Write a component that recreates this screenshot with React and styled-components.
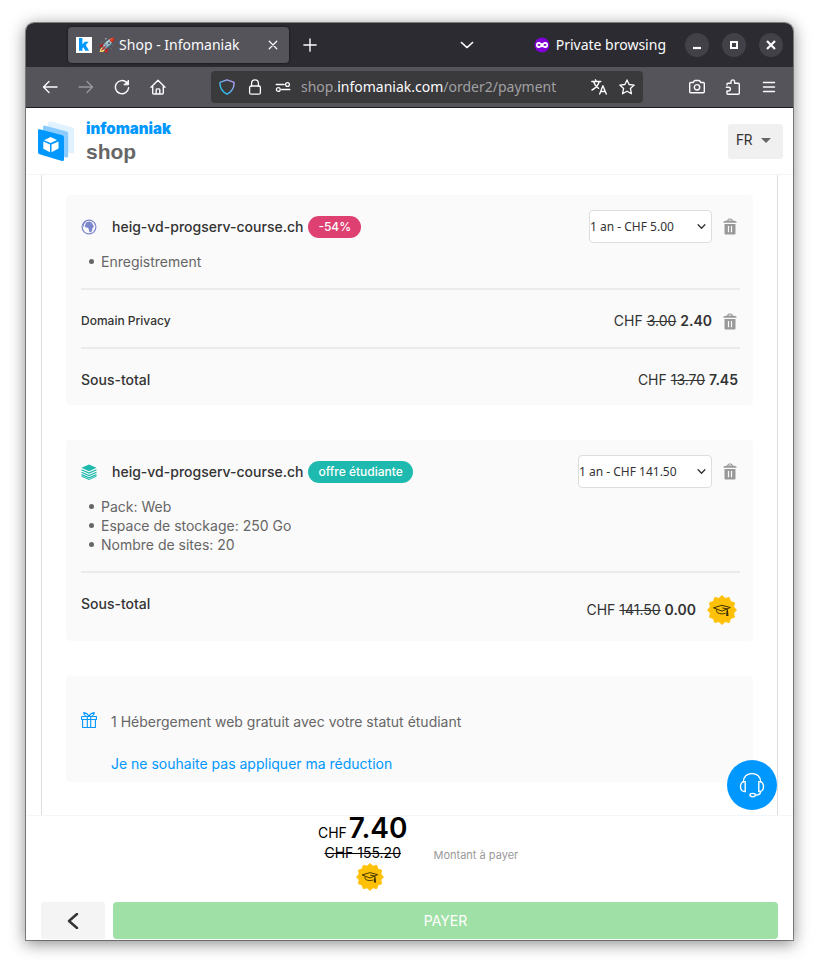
import React from "react";
import styled, { createGlobalStyle } from "styled-components";

const sans = `Inter, "Liberation Sans", sans-serif`;
const chromeFont = `"Noto Sans", "Noto Color Emoji", sans-serif`;
const blue = "#0098ff";

const GlobalStyle = createGlobalStyle`
  * { box-sizing: border-box; }
  body { margin: 0; background: #fff; font-family: ${sans}; font-size: 14px; color: #333; }
  button, select, input { font: inherit; color: inherit; margin: 0; }
  button { border: 0; padding: 0; background: none; cursor: pointer; }
  svg { display: block; flex: none; }
`;

const Desktop = styled.div`
  display: flex;
  min-height: 100vh;
  padding: 23px 26px 29px;
  overflow: hidden;
`;
const Window = styled.div`
  flex: 1;
  min-width: 0;
  display: flex;
  flex-direction: column;
  background: #fff;
  border-radius: 8px 8px 0 0;
  box-shadow: 0 0 0 1px rgba(0, 0, 0, 0.4), 0 3px 16px 1px rgba(0, 0, 0, 0.45);
`;

/* Browser chrome */
const TabBar = styled.div`
  display: flex;
  align-items: center;
  height: 44px;
  padding: 0 10px 0 42px;
  background: #2c2b31;
  border-radius: 8px 8px 0 0;
  color: #fbfbfe;
  font: 14px/20px ${chromeFont};
`;
const Tab = styled.div`
  display: flex;
  align-items: center;
  width: 221px;
  height: 36px;
  padding: 0 8px;
  background: #55545a;
  border-radius: 4px;
  box-shadow: 0 0 3px rgba(0, 0, 0, 0.6);
`;
const TabTitle = styled.span`
  flex: 1;
  margin-left: 6px;
  white-space: nowrap;
`;
const TabButton = styled.button`
  display: grid;
  place-items: center;
  width: ${(p) => p.$size || 16}px;
  height: ${(p) => p.$size || 16}px;
`;
const NewTab = styled(TabButton)`
  margin-left: 9px;
`;
const PrivateGroup = styled.div`
  display: flex;
  align-items: center;
  gap: 6px;
  margin: 0 19px 0 59px;
  white-space: nowrap;
`;
const Spacer = styled.div`
  flex: 1;
`;
const WindowButtons = styled.div`
  display: flex;
  gap: 13px;
`;
const WindowButton = styled.button`
  display: grid;
  place-items: center;
  width: 24px;
  height: 24px;
  border-radius: 50%;
  background: #424147;
`;
const Toolbar = styled.div`
  display: flex;
  align-items: center;
  height: 41px;
  padding: 0 6px;
  background: #55545a;
  border-bottom: 1px solid #1c1b22;
  color: #fbfbfe;
`;
const ToolButton = styled.button`
  display: grid;
  place-items: center;
  width: 36px;
  height: 32px;
  opacity: ${(p) => (p.disabled ? 0.4 : 1)};
`;
const AddressBar = styled.div`
  flex: 1;
  min-width: 0;
  display: flex;
  align-items: center;
  gap: 12px;
  height: 32px;
  margin: 0 36px 0 35px;
  padding: 0 8px;
  background: #3a393b;
  border-radius: 4px;
`;
const Address = styled.div`
  flex: 1;
  margin-left: -2px;
  overflow: hidden;
  white-space: nowrap;
  color: #a0a0a3;
  font: 14px/20px ${chromeFont};
`;
const Host = styled.span`
  color: #fbfbfe;
`;

/* Shop page */
const Header = styled.header`
  display: flex;
  align-items: center;
  gap: 12px;
  height: 67px;
  padding: 0 10px 0 12px;
  border-bottom: 1px solid #f4f4fb;
`;
const Brand = styled.div`
  flex: 1;
`;
const BrandName = styled.div`
  font: 900 15px/22px ${sans};
  color: ${blue};
`;
const BrandProduct = styled.div`
  font: 700 21px/24px "Liberation Sans", sans-serif;
  color: #666;
`;
const LanguageButton = styled.button`
  display: flex;
  align-items: center;
  justify-content: space-between;
  width: 55px;
  height: 35px;
  padding: 0 12px 2px 8px;
  border-radius: 3px;
  background: #f0f0f0;
  font: 14px/20px Roboto, sans-serif;
`;
const Content = styled.main`
  position: relative;
  flex: 1;
  padding: 0 15px;
`;
const Column = styled.div`
  display: flex;
  flex-direction: column;
  gap: 35px;
  height: 100%;
  padding: 20px 24px 33px;
  border: solid #ddd;
  border-width: 0 1px;
`;
const Card = styled.section`
  padding: 15px 13px 0 15px;
  border-radius: 4px;
  background: #fafafa;
`;
const CardHead = styled.div`
  display: flex;
  align-items: center;
  height: 33px;
  padding-right: 3px;
`;
const CardTitle = styled.h2`
  margin: 0 5px 0 15px;
  font-size: 14px;
  line-height: 20px;
  font-weight: 500;
`;
const Pill = styled.span`
  padding: 0 10px;
  border-radius: 11px;
  background: ${(p) => p.$color};
  color: #fff;
  font-size: 12px;
  line-height: 22px;
  font-weight: 500;
`;
const SelectBox = styled.label`
  display: grid;
  align-items: center;
  width: ${(p) => p.$width}px;
  margin: 0 11px 0 auto;

  > * { grid-area: 1 / 1; }
  > svg { justify-self: end; margin-right: 6px; pointer-events: none; }
`;
const Select = styled.select`
  appearance: none;
  width: 100%;
  height: 33px;
  padding: 0;
  border: 1px solid #ddd;
  border-radius: 4px;
  background: #fff;
  font: 12px/16px "Noto Sans", sans-serif;
`;
const Features = styled.ul`
  margin: 0;
  padding: 9px 0 17px 8px;
  list-style: none;
  color: #666;
  line-height: 19px;
`;
const Feature = styled.li`
  display: flex;
  align-items: center;
  gap: 7px;

  &::before {
    content: "";
    width: 5px;
    height: 5px;
    border-radius: 50%;
    background: #666;
  }
`;
const Row = styled.div`
  display: flex;
  align-items: flex-start;
  padding: 21px 2px 16px 0;
  border-top: 2px solid #ebebeb;
  line-height: 20px;

  &:last-child { padding-bottom: 15px; }
`;
const RowLabel = styled.div`
  flex: 1;
  font-size: ${(p) => (p.$small ? 12 : 14)}px;
  font-weight: 500;
`;
const RowEnd = styled.div`
  display: flex;
  align-items: center;
  gap: 11px;
  min-height: ${(p) => (p.$tall ? 32 : 20)}px;
  padding-right: ${(p) => (p.$icon ? 1 : 0)}px;
`;
const Strong = styled.strong`
  font-weight: 600;
`;
const GiftCard = styled(Card)`
  display: grid;
  grid-template-columns: 16px 1fr;
  column-gap: 14px;
  row-gap: 22px;
  padding: 36px 15px 8px;
  line-height: 20px;
  color: #666;
`;
const DeclineLink = styled.a`
  grid-column: 2;
  color: ${blue};
  text-decoration: none;
`;
const ChatButton = styled.button`
  position: absolute;
  right: 16px;
  bottom: 5px;
  display: grid;
  place-items: center;
  width: 50px;
  height: 50px;
  border-radius: 50%;
  background: ${blue};
`;
const Footer = styled.footer`
  border-top: 1px solid #f4f4fb;
`;
const Summary = styled.div`
  display: grid;
  grid-template-columns: 1fr 1fr;
  height: 86px;
  color: #000;
`;
const Totals = styled.div`
  justify-self: end;
  display: flex;
  flex-direction: column;
  align-items: center;
  padding-right: 2px;
`;
const Total = styled.div`
  display: flex;
  align-items: baseline;
  gap: 2px;
  height: 27px;
  line-height: 24px;
`;
const Amount = styled.span`
  font-size: 28px;
  font-weight: 600;
`;
const OldTotal = styled.del`
  line-height: 20px;
`;
const BadgeSlot = styled.div`
  padding-left: 14px;
`;
const AmountLabel = styled.div`
  padding: 31px 0 0 24px;
  font-size: 11px;
  line-height: 16px;
  color: #999;
`;
const Actions = styled.div`
  display: flex;
  gap: 8px;
  padding: 0 15px 1px;
`;
const BackButton = styled.button`
  display: grid;
  place-items: center;
  width: 64px;
  height: 37px;
  border-radius: 2px;
  background: #f4f4f4;
`;
const PayButton = styled.button`
  flex: 1;
  height: 37px;
  border-radius: 4px;
  background: #9fe0a6;
  color: #fff;
`;

/* Icons */
const Line = ({ size = 16, w = 1.4, children, ...rest }) => (
  <svg width={size} height={size} viewBox="0 0 16 16" fill="none" stroke="currentColor"
    strokeWidth={w} strokeLinecap="round" strokeLinejoin="round" {...rest}>
    {children}
  </svg>
);

const Favicon = () => (
  <svg width="16" height="16" viewBox="0 0 16 16">
    <rect width="16" height="16" fill="#fff" />
    <path d="M3 1h3.4v6.6L8.8 4.800h3.900L9.700 8l3.400 5.700H9.300L7.400 10.300l-1 1v2.400H3z" fill={blue} />
  </svg>
);
const MaskIcon = () => (
  <svg width="16" height="16" viewBox="0 0 16 16">
    <circle cx="8" cy="8" r="7.500" fill="#8000d7" />
    <path d="M8 6.600C6.900 5.500 5.900 5 4.700 5 3 5 1.900 6.100 1.900 7.900S3 11 4.500 11c1.300 0 2.200-1.100 3.500-1.100s2.200 1.100 3.500 1.100c1.500 0 2.600-1.300 2.600-3.100S13 5 11.300 5C10.100 5 9.100 5.500 8 6.600z" fill="#fff" />
    <ellipse cx="5" cy="8" rx="1.500" ry="1" fill="#8000d7" />
    <ellipse cx="11" cy="8" rx="1.500" ry="1" fill="#8000d7" />
  </svg>
);
const ShieldIcon = () => (
  <svg width="16" height="16" viewBox="0 0 16 16" fill="none">
    <defs>
      <linearGradient id="shield" x1="0" y1="1" x2="1" y2="0">
        <stop offset="0.200" stopColor="#2ac3f2" />
        <stop offset="0.900" stopColor="#b39df5" />
      </linearGradient>
    </defs>
    <path d="M8 .8 14.500 3.100c.6.200.7.600.6 1.200C14.900 9.500 12.500 13 8 15.200 3.500 13 1.100 9.500.9 4.300c0-.6.1-1 .6-1.200z" stroke="url(#shield)" strokeWidth="1.400" strokeLinejoin="round" />
  </svg>
);
const LockIcon = () => (
  <Line w={1.3}><rect x="2.600" y="7" width="10.800" height="8.200" rx="1.500" /><path d="M4.600 7V4.200a3.400 3.400 0 0 1 6.800 0V7" /></Line>
);
const PermissionsIcon = () => (
  <Line w={1.3}><path d="M1.200 5.500h8M6.500 10.500h8.300" /><circle cx="12.500" cy="5.500" r="1.900" /><circle cx="3.300" cy="10.500" r="1.900" /></Line>
);
const TranslateIcon = () => (
  <Line w={1.4}><path d="M.8 2.500h9M4.500.8l.8 1.700M2.600 2.800c1 3.300 3.300 5.500 5 6.500M8.200 2.800C7 6.800 4.500 9.300 1 11M8.700 15l3.200-8.200L15.300 15M9.800 12.500h4.500" /></Line>
);
const StarIcon = () => (
  <Line w={1.3}><path d="M8 .9l2.100 4.600 5.100.6-3.800 3.400 1.100 5.300L8 12.200l-4.500 2.600 1.100-5.300L.8 6.100l5.100-.6z" /></Line>
);
const CameraIcon = () => (
  <Line w={1.4}><path d="M1.700 3.500h2.500l1-1.500c.2-.3.500-.5.900-.5h3.800c.4 0 .7.200.9.500l1 1.500h2.500c.6 0 1 .4 1 1v8.300c0 .6-.4 1-1 1H1.700c-.6 0-1-.4-1-1V4.500c0-.6.4-1 1-1z" /><circle cx="8" cy="8.300" r="2.700" /></Line>
);
const PuzzleIcon = () => (
  <Line w={1.4}><path d="M2 6V5.300c0-.6.400-1 1-1h3V2.700a1.800 1.800 0 0 1 3.600 0v1.600h3.700c.6 0 1 .4 1 1v8.900c0 .6-.4 1-1 1H3c-.6 0-1-.4-1-1V12h1.500a1.900 1.900 0 0 0 0-3.800H1.300" /></Line>
);
const ShopLogo = () => (
  <svg width="36" height="40" viewBox="0 0 36 40">
    <path d="M13.500.7 34.500 6.500c1 .3 1.500 1 1.500 2V31c0 1.200-1 1.800-2 1.500L10 25.500V2c0-1 1.400-1.800 3.500-1.300z" fill="#e0f1ff" />
    <path d="M7.500 4.700 28.700 10.500c1 .3 1.500 1 1.500 2V35c0 1.200-1 1.800-2 1.500L5 29.500V6c0-1 .9-1.700 2.500-1.300z" fill="#8accff" />
    <path d="M1.500 8.200 24.300 14.200c1.100.3 1.700 1 1.700 2V38.500c0 1.200-.9 1.700-2 1.400L1.500 33.200C.5 32.900 0 32.300 0 31.300V9.500C0 8.500.6 8 1.500 8.200z" fill={blue} />
    <path d="M12.600 16 19 19 12.700 22 6 19.200z" fill="#fff" />
    <path d="M5.300 20.600 12 23.500v7.800L5.300 27.700zM20.500 20.600 13.500 23.600v7.700l7-3.800z" fill="#fff" />
  </svg>
);
const GlobeIcon = () => (
  <svg width="16" height="16" viewBox="0 0 16 16">
    <circle cx="8" cy="8" r="6.900" fill="none" stroke="#7b86cc" strokeWidth="1.200" />
    <path d="M5.200 3.500 8 2.600l2.800.9 1.300 2.700.9.700-.8 1.700-1 1.200v1.600L9.700 13.600 8.300 13l-.6-2.800-.6-1.400-2.300-.4L3.700 7z" fill="#7b86cc" />
    <path d="M1.500 5.500 3.700 2.700l1.500-.9-.5 1.500L3 5.200l-.5 3.500z" fill="#7b86cc" />
    <path d="M12.800 3l1.400 2.200-.8.5z" fill="#7b86cc" />
  </svg>
);
const LayersIcon = () => (
  <svg width="16" height="16" viewBox="0 0 16 16" fill="none" stroke="#1db9ae">
    <path d="M8 .5 15.500 3.800 8 7.200.5 3.800z" fill="#1db9ae" stroke="none" />
    <path d="M.5 5.800 8 9.100l7.500-3.300M.5 8.300 8 11.600l7.500-3.300M.5 10.600 8 13.900l7.500-3.300" strokeWidth="1.200" />
    <path d="M.5 12.200 8 15.500l7.500-3.300" strokeWidth="1" />
  </svg>
);
const TrashIcon = () => (
  <svg width="14" height="17" viewBox="0 0 14 17">
    <path d="M4.200 2.600C4.600 1 5.500.5 7 .5s2.400.5 2.800 2.100l2.500.4c.8.200 1.300.8 1.400 1.700H.3c.1-.9.600-1.500 1.400-1.700zM5.300 2.500h3.400C8.400 1.800 7.900 1.600 7 1.600s-1.400.2-1.700.9z" fill="#999" fillRule="evenodd" />
    <path d="M1.500 6h11v9.200c0 .8-.4 1.300-1.200 1.300H2.700c-.8 0-1.200-.5-1.200-1.300zM4.900 8v6.200h1.200V8zM7.900 8v6.200h1.200V8z" fill="#999" fillRule="evenodd" />
  </svg>
);
const GiftIcon = () => (
  <svg width="16" height="16" viewBox="0 0 16 16" fill="none" stroke={blue} strokeWidth="1.100" strokeLinejoin="round">
    <path d="M.6 4.500h14.800v3H.6zM1.600 7.500h12.800v8H1.600zM6.300 4.500v11M9.700 4.500v11" />
    <path d="M8 4.400C6.800 1.700 5 .9 2.700.6c.1 1.700.8 3 2.600 3.700M8 4.400C9.200 1.700 11 .9 13.300.6c-.1 1.700-.8 3-2.600 3.700" />
  </svg>
);
const starPoints = Array.from({ length: 24 }, (_, i) => {
  const r = i % 2 ? 12 : 14.4;
  const a = (i * Math.PI) / 12 - Math.PI / 2;
  return `${(15 + r * Math.cos(a)).toFixed(2)},${(15 + r * Math.sin(a)).toFixed(2)}`;
}).join(" ");
const StudentBadge = ({ size }) => (
  <svg width={size} height={size} viewBox="0 0 30 30" role="img" aria-label="Offre étudiante">
    <polygon points={starPoints} fill="#ffc107" stroke="#ffc107" strokeWidth="1" strokeLinejoin="round" />
    <g fill="none" stroke="#3a3000" strokeWidth="1" strokeLinejoin="round">
      <path d="M6.500 12.800 15 10.300l8.300 2.200-8.300 3.600z" />
      <path d="M9.700 14.400c-.3 1.300 0 2.500.7 3.300 2.500 1.400 5.600 1.600 8.300.4M15.300 12.900l5 1.100v2" />
    </g>
    <path d="M19.500 15.500h1.500l.5 5.500h-2.400z" fill="#3a3000" />
  </svg>
);
const HeadsetIcon = () => (
  <svg width="26" height="26" viewBox="0 0 26 26" fill="none" stroke="#fff" strokeWidth="1.400">
    <path d="M4.200 10.500C4.200 4.800 8 1.500 13 1.500s8.800 3.300 8.800 9" />
    <path d="M6.200 9.700v9.800C3 19.800 1.500 17.800 1.500 14.700S3 9.300 6.200 9.700zM19.800 9.700v9.800c3.200.3 4.700-1.700 4.700-4.800s-1.500-5.400-4.700-5z" />
    <path d="M21.600 19.500c0 2.700-1.500 3.700-5 3.700" />
    <ellipse cx="13.700" cy="23.100" rx="2.700" ry="1.700" />
  </svg>
);
const SelectChevron = () => <Line size={9} w={2.4}><path d="M2 5l6 6 6-6" /></Line>;

const PlanSelect = ({ width, value }) => (
  <SelectBox $width={width}>
    <Select aria-label="Durée" defaultValue={value}>
      <option>{value}</option>
    </Select>
    <SelectChevron />
  </SelectBox>
);
const DeleteButton = () => (
  <button type="button" aria-label="Supprimer"><TrashIcon /></button>
);
const Price = ({ old, now }) => (
  <span>CHF <del>{old}</del> <Strong>{now}</Strong></span>
);

export default function App() {
  return (
    <Desktop>
      <GlobalStyle />
      <Window>
        <TabBar>
          <Tab>
            <Favicon />
            <TabTitle>🚀 Shop - Infomaniak</TabTitle>
            <TabButton aria-label="Fermer l'onglet"><Line size={10} w={2}><path d="M2 2l12 12M14 2L2 14" /></Line></TabButton>
          </Tab>
          <NewTab $size={24} aria-label="Nouvel onglet"><Line size={14} w={1.6}><path d="M8 1v14M1 8h14" /></Line></NewTab>
          <Spacer />
          <TabButton aria-label="Liste des onglets"><Line size={14} w={1.6}><path d="M1.500 5L8 11l6.500-6" /></Line></TabButton>
          <PrivateGroup><MaskIcon />Private browsing</PrivateGroup>
          <WindowButtons>
            <WindowButton aria-label="Réduire"><Line w={2.2} strokeLinecap="butt"><path d="M4 11h8" /></Line></WindowButton>
            <WindowButton aria-label="Agrandir"><Line w={2} strokeLinejoin="miter"><path d="M5 5h6v6H5z" /></Line></WindowButton>
            <WindowButton aria-label="Fermer"><Line w={2.2} strokeLinecap="butt"><path d="M4 4l8 8M12 4l-8 8" /></Line></WindowButton>
          </WindowButtons>
        </TabBar>
        <Toolbar>
          <ToolButton aria-label="Précédent"><Line><path d="M15 8H1.500M7 2.500L1.500 8 7 13.500" /></Line></ToolButton>
          <ToolButton disabled aria-label="Suivant"><Line><path d="M1 8h13.500M9 2.500L14.500 8 9 13.500" /></Line></ToolButton>
          <ToolButton aria-label="Actualiser"><Line><path d="M14.600 8.800A6.600 6.600 0 1 1 12.700 3.500" /><path d="M14.500 1.500v4.300h-4.300z" fill="currentColor" strokeWidth="1" /></Line></ToolButton>
          <ToolButton aria-label="Accueil"><Line><path d="M1 8.200L8 1.300l7 6.900M2.700 6.800v7.200c0 .6.400 1 1 1h8.600c.6 0 1-.4 1-1V6.800M6.200 14.800v-4c0-.5.400-.9.900-.9h1.800c.5 0 .9.400.9.900v4" /></Line></ToolButton>
          <AddressBar>
            <ShieldIcon /><LockIcon /><PermissionsIcon />
            <Address>shop.<Host>infomaniak.com</Host>/order2/payment</Address>
            <TranslateIcon /><StarIcon />
          </AddressBar>
          <ToolButton aria-label="Capture d'écran"><CameraIcon /></ToolButton>
          <ToolButton aria-label="Extensions"><PuzzleIcon /></ToolButton>
          <ToolButton aria-label="Menu"><Line><path d="M2.500 3.500h11M2.500 8h11M2.500 12.500h11" /></Line></ToolButton>
        </Toolbar>

        <Header>
          <ShopLogo />
          <Brand>
            <BrandName>infomaniak</BrandName>
            <BrandProduct>shop</BrandProduct>
          </Brand>
          <LanguageButton>
            FR
            <svg width="10" height="5" viewBox="0 0 10 5"><path d="M0 0h10L5 5z" fill="#666" /></svg>
          </LanguageButton>
        </Header>

        <Content>
          <Column>
            <Card>
              <CardHead>
                <GlobeIcon />
                <CardTitle>heig-vd-progserv-course.ch</CardTitle>
                <Pill $color="#dd4071">-54%</Pill>
                <PlanSelect width={123} value="1 an - CHF 5.00" />
                <DeleteButton />
              </CardHead>
              <Features><Feature>Enregistrement</Feature></Features>
              <Row>
                <RowLabel $small>Domain Privacy</RowLabel>
                <RowEnd $icon><Price old="3.00" now="2.40" /><DeleteButton /></RowEnd>
              </Row>
              <Row>
                <RowLabel>Sous-total</RowLabel>
                <RowEnd><Price old="13.70" now="7.45" /></RowEnd>
              </Row>
            </Card>

            <Card>
              <CardHead>
                <LayersIcon />
                <CardTitle>heig-vd-progserv-course.ch</CardTitle>
                <Pill $color="#1fbaaf">offre étudiante</Pill>
                <PlanSelect width={134} value="1 an - CHF 141.50" />
                <DeleteButton />
              </CardHead>
              <Features>
                <Feature>Pack: Web</Feature>
                <Feature>Espace de stockage: 250 Go</Feature>
                <Feature>Nombre de sites: 20</Feature>
              </Features>
              <Row>
                <RowLabel>Sous-total</RowLabel>
                <RowEnd $icon $tall><Price old="141.50" now="0.00" /><StudentBadge size={30} /></RowEnd>
              </Row>
            </Card>

            <GiftCard>
              <GiftIcon />
              <span>1 Hébergement web gratuit avec votre statut étudiant</span>
              <DeclineLink href="#">Je ne souhaite pas appliquer ma réduction</DeclineLink>
            </GiftCard>
          </Column>
          <ChatButton aria-label="Assistance"><HeadsetIcon /></ChatButton>
        </Content>

        <Footer>
          <Summary>
            <Totals>
              <Total>CHF <Amount>7.40</Amount></Total>
              <OldTotal>CHF 155.20</OldTotal>
              <BadgeSlot><StudentBadge size={28} /></BadgeSlot>
            </Totals>
            <AmountLabel>Montant à payer</AmountLabel>
          </Summary>
          <Actions>
            <BackButton aria-label="Retour"><Line w={2.4}><path d="M12 1L4 8l8 7" /></Line></BackButton>
            <PayButton>PAYER</PayButton>
          </Actions>
        </Footer>
      </Window>
    </Desktop>
  );
}
